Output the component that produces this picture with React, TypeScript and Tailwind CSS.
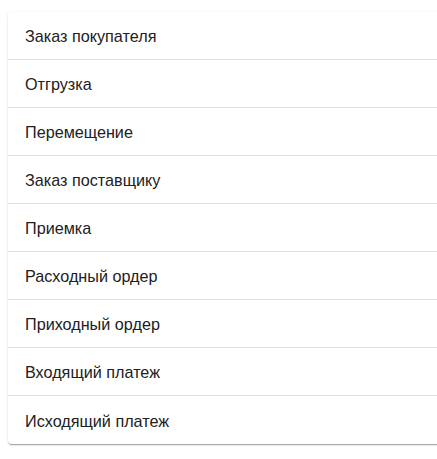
import React from "react";

const items = [
  "Заказ покупателя",
  "Отгрузка",
  "Перемещение",
  "Заказ поставщику",
  "Приемка",
  "Расходный ордер",
  "Приходный ордер",
  "Входящий платеж",
  "Исходящий платеж",
];

export default function App() {
  return (
    <div className="w-[437px] h-[459px] overflow-hidden bg-white pt-[12px] pl-[8px]" style={{ fontFamily: '"Liberation Sans", Arial, sans-serif' }}>
      <div className="w-[460px] bg-white rounded-[4px] shadow-[0px_2px_1px_-1px_rgba(0,0,0,0.2),0px_1px_1px_0px_rgba(0,0,0,0.14),0px_1px_3px_0px_rgba(0,0,0,0.12)]">
        {items.map((t, i) => (
          <div
            key={t}
            className={`h-[48px] flex items-center pl-[17px] pr-[16px] pt-[2px] text-[16.2px] text-[#212121] ${i < items.length - 1 ? "border-b border-[rgba(0,0,0,0.12)]" : ""}`}
          >
            {t}
          </div>
        ))}
      </div>
    </div>
  );
}
